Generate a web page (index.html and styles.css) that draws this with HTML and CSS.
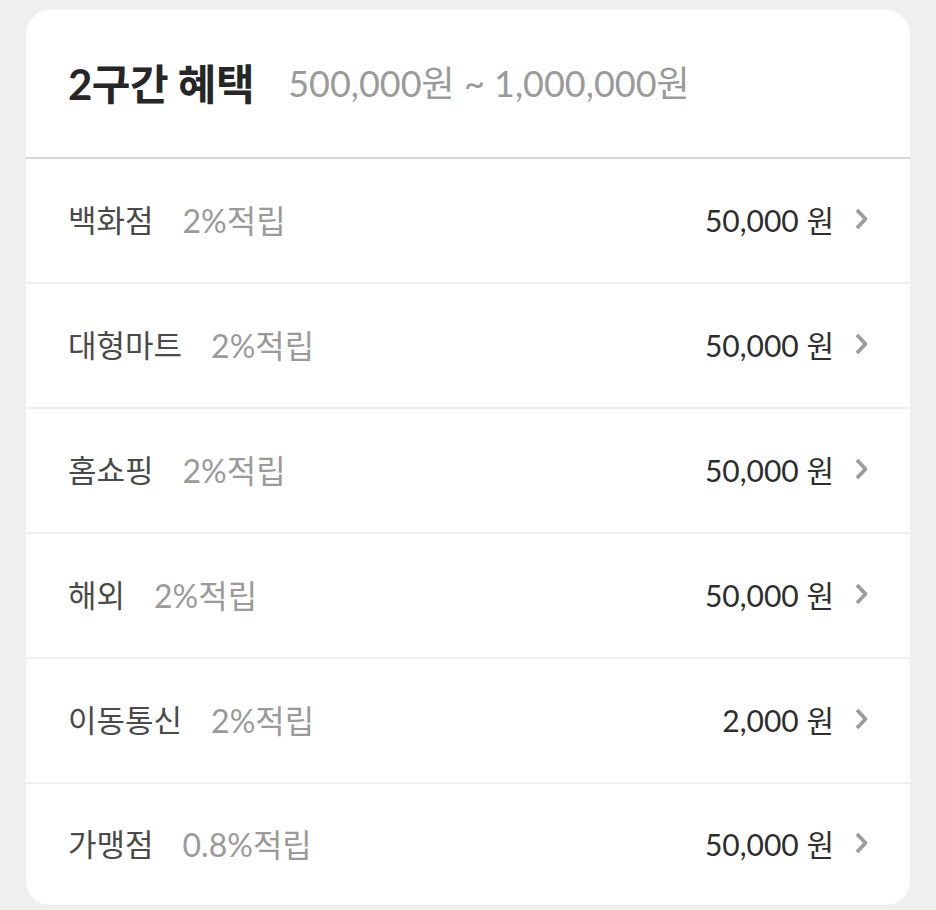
FILE: index.html
```html
<!DOCTYPE html>
<html lang="ko">
<head>
<meta charset="utf-8">
<link rel="stylesheet" href="styles.css">
</head>
<body>
<div class="card">
  <div class="header">
    <span class="title">2구간 혜택</span>
    <span class="range">500,000원 ~ 1,000,000원</span>
  </div>
  <ul class="list">
    <li class="row"><span class="name">백화점</span><span class="rate">2%적립</span><span class="amount">50,000 원</span><svg class="chev" viewBox="0 0 15 24" width="15" height="24"><path d="M3 3l8.5 9-8.5 9" fill="none" stroke="currentColor" stroke-width="3.8" stroke-linejoin="round"/></svg></li>
    <li class="row"><span class="name">대형마트</span><span class="rate">2%적립</span><span class="amount">50,000 원</span><svg class="chev" viewBox="0 0 15 24" width="15" height="24"><path d="M3 3l8.5 9-8.5 9" fill="none" stroke="currentColor" stroke-width="3.8" stroke-linejoin="round"/></svg></li>
    <li class="row"><span class="name">홈쇼핑</span><span class="rate">2%적립</span><span class="amount">50,000 원</span><svg class="chev" viewBox="0 0 15 24" width="15" height="24"><path d="M3 3l8.5 9-8.5 9" fill="none" stroke="currentColor" stroke-width="3.8" stroke-linejoin="round"/></svg></li>
    <li class="row"><span class="name">해외</span><span class="rate">2%적립</span><span class="amount">50,000 원</span><svg class="chev" viewBox="0 0 15 24" width="15" height="24"><path d="M3 3l8.5 9-8.5 9" fill="none" stroke="currentColor" stroke-width="3.8" stroke-linejoin="round"/></svg></li>
    <li class="row"><span class="name">이동통신</span><span class="rate">2%적립</span><span class="amount">2,000 원</span><svg class="chev" viewBox="0 0 15 24" width="15" height="24"><path d="M3 3l8.5 9-8.5 9" fill="none" stroke="currentColor" stroke-width="3.8" stroke-linejoin="round"/></svg></li>
    <li class="row"><span class="name">가맹점</span><span class="rate">0.8%적립</span><span class="amount">50,000 원</span><svg class="chev" viewBox="0 0 15 24" width="15" height="24"><path d="M3 3l8.5 9-8.5 9" fill="none" stroke="currentColor" stroke-width="3.8" stroke-linejoin="round"/></svg></li>
  </ul>
</div>
</body>
</html>
```
FILE: styles.css
```css
html, body {
  margin: 0;
  padding: 0;
  background: #efefef;
}
body {
  padding: 10px 26px 5px 26px;
  font-family: "Lato", "Noto Sans CJK KR", sans-serif;
}
.card {
  background: #ffffff;
  border-radius: 24px;
  overflow: hidden;
}
.header {
  height: 149px;
  box-sizing: border-box;
  display: flex;
  align-items: center;
  padding: 0 42px 5px 42px;
  gap: 34px;
  border-bottom: 2px solid #d9d9d9;
}
.title {
  font-size: 42px;
  font-weight: 700;
  color: #262626;
  letter-spacing: -0.5px;
}
.range {
  font-size: 36px;
  color: #9a9a9a;
}
.list {
  list-style: none;
  margin: 0;
  padding: 0;
}
.row {
  height: 125px;
  box-sizing: border-box;
  display: flex;
  align-items: center;
  padding: 0 41px 4px 42px;
  border-bottom: 2px solid #efefef;
  font-size: 31px;
}
.row:last-child {
  border-bottom: none;
  height: 121px;
}
.name {
  color: #4a4a4a;
}
.rate {
  color: #9a9a9a;
  margin-left: 29px;
  font-size: 32px;
}
.amount {
  margin-left: auto;
  color: #2e2e2e;
  font-size: 30px;
}
.chev {
  margin-left: 20px;
  color: #9c9c9c;
}
```
